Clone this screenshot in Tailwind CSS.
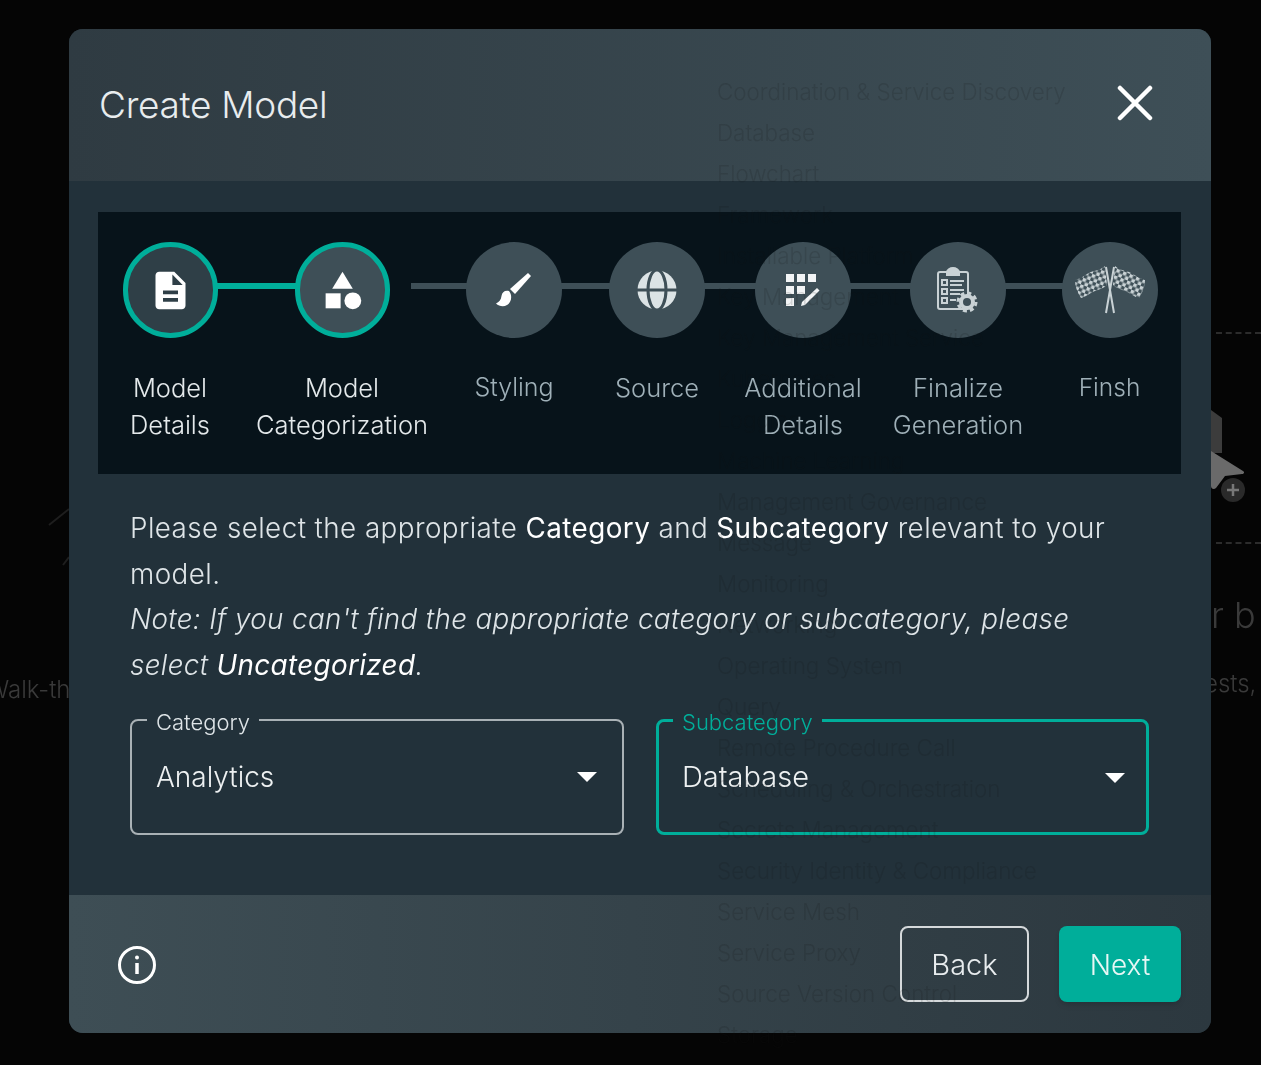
<!DOCTYPE html>
<html lang="en">
<head>
    <meta charset="UTF-8">
    <meta name="viewport" content="width=device-width, initial-scale=1.0">
    <title>Create Model</title>
    <script src="https://cdn.jsdelivr.net/npm/@tailwindcss/browser@4"></script>
</head>
<body class="bg-[#050505]">
    <div class="relative w-[1261px] h-[1065px] overflow-hidden font-['Inter',sans-serif] font-light blur-[0.5px]">
        <!-- Page behind the modal -->
        <span class="absolute left-[-14px] top-[674px] text-[24px] leading-[32px] text-[#3a3a3a] whitespace-nowrap">Walk-th</span>
        <span class="absolute left-[1211px] top-[592px] text-[36px] leading-[46px] text-[#3a3a3a] whitespace-nowrap">r b</span>
        <span class="absolute left-[1204px] top-[668px] text-[24px] leading-[32px] text-[#3a3a3a] whitespace-nowrap">ests,</span>
        <div class="absolute left-[1216px] top-[332px] w-[45px] border-t-2 border-dashed border-[#2c2c2c]"></div>
        <div class="absolute left-[1216px] top-[542px] w-[45px] border-t-2 border-dashed border-[#2c2c2c]"></div>
        <svg class="absolute left-[1205px] top-[405px]" width="56" height="105" viewBox="0 0 56 105">
            <path d="M6 5l11 8v35H6z" fill="#3c3c3c"/>
            <path d="M6 46l32 20c2 1 1 3-1 3l-17 2-9 12c-2 2-5 1-5-2z" fill="#6a6a6a"/>
            <circle cx="28" cy="85" r="12" fill="#2a2a2a"/>
            <path d="M28 79v12M22 85h12" stroke="#777" stroke-width="2.500"/>
        </svg>
        <svg class="absolute left-[45px] top-[505px]" width="24" height="65" viewBox="0 0 24 65" fill="none" stroke="#1e1e1e" stroke-width="2">
            <path d="M4 20L24 4M18 60l6-8"/>
        </svg>

        <!-- Modal -->
        <div class="absolute left-[69px] top-[29px] w-[1142px] h-[1004px] rounded-[14px] overflow-hidden bg-[#22313a] flex flex-col text-white">
            <div class="h-[152px] shrink-0 flex items-center justify-between pl-[30px] pr-[58px] bg-gradient-to-r from-[#2f3b42] to-[#3e4f57]">
                <h1 class="text-[37px] leading-[46px] font-light text-[#e8ecee] tracking-[-0.3px]">Create Model</h1>
                <svg class="mb-[5px]" width="36" height="36" viewBox="0 0 36 36" fill="none" stroke="#ffffff" stroke-width="4.500" stroke-linecap="round">
                    <path d="M3 3l30 30M33 3L3 33"/>
                </svg>
            </div>

            <div class="flex-1 pl-[29px] pr-[30px] pt-[31px]">
                <!-- Stepper -->
                <div class="relative h-[262px] bg-[#07131a] pt-[30px] grid grid-cols-[144px_200px_144px_142px_150px_160px_143px]">
                    <div class="absolute left-[118px] top-[71px] w-[80px] h-[6px] bg-[#00ae9a]"></div>
                    <div class="absolute left-[313px] top-[71px] w-[652px] h-[6px] bg-[#3e4f57]"></div>

                    <div class="relative flex flex-col items-center">
                        <div class="w-[95px] h-[96px] rounded-full border-[5px] border-[#00ae9a] bg-[#2f3f47] flex items-center justify-center">
                            <svg width="45" height="45" viewBox="0 0 24 24" fill="#ffffff"><path d="M14 2H6c-1.100 0-2 .9-2 2v16c0 1.100.9 2 2 2h12c1.100 0 2-.9 2-2V8l-6-6zm2 16H8v-2h8v2zm0-4H8v-2h8v2zm-3-5V3.500L18.500 9H13z"/></svg>
                        </div>
                        <p class="mt-[31px] text-[25.500px] leading-[37px] text-center text-[#e4e9eb] whitespace-nowrap">Model<br>Details</p>
                    </div>
                    <div class="relative flex flex-col items-center">
                        <div class="w-[95px] h-[96px] rounded-full border-[5px] border-[#00ae9a] bg-[#3e4f57] flex items-center justify-center">
                            <svg width="45" height="45" viewBox="0 0 24 24" fill="#ffffff"><path d="M12 2l-5.500 9h11z"/><circle cx="17.500" cy="17.500" r="4.500"/><path d="M3 13.500h8v8H3z"/></svg>
                        </div>
                        <p class="mt-[31px] text-[25.500px] leading-[37px] text-center text-[#e4e9eb] whitespace-nowrap">Model<br>Categorization</p>
                    </div>
                    <div class="relative flex flex-col items-center">
                        <div class="w-[96px] h-[96px] rounded-full bg-[#3e4f57] flex items-center justify-center">
                            <svg width="36" height="36" viewBox="0 0 36 36" fill="#ffffff"><path d="M32 1l3 3-16 18-5-5z"/><path d="M13 19c-4-1-7 1-7.500 5C5 28 3 30 0 31.500c3 3 8 3.500 11 1.500 4-2 6-9 2-14z"/></svg>
                        </div>
                        <p class="mt-[31px] text-[25px] leading-[37px] text-center text-[#9fb0b8]">Styling</p>
                    </div>
                    <div class="relative flex flex-col items-center">
                        <div class="w-[96px] h-[96px] rounded-full bg-[#3e4f57] flex items-center justify-center">
                            <svg width="40" height="40" viewBox="0 0 40 40">
                                <circle cx="20" cy="20" r="19.500" fill="#dce3e5"/>
                                <ellipse cx="20" cy="20" rx="9" ry="20" fill="none" stroke="#3e4f57" stroke-width="3"/>
                                <path d="M0 20h40" stroke="#3e4f57" stroke-width="3"/>
                            </svg>
                        </div>
                        <p class="mt-[31px] text-[25.500px] leading-[37px] text-center text-[#9fb0b8]">Source</p>
                    </div>
                    <div class="relative flex flex-col items-center">
                        <div class="w-[96px] h-[96px] rounded-full bg-[#3e4f57] flex items-center justify-center">
                            <svg width="34" height="32" viewBox="0 0 34 32" fill="#f2f4f5">
                                <path d="M0 0h8v8H0zM11 0h8v8h-8zM22 0h8v8h-8zM0 12h8v8H0zM11 12h8v8h-8zM0 24h8v8H0z"/>
                                <path d="M31 14l2.500 2.500L19 31l-4 1 1-4z"/>
                            </svg>
                        </div>
                        <p class="mt-[31px] text-[25.500px] leading-[37px] text-center text-[#9fb0b8] whitespace-nowrap">Additional<br>Details</p>
                    </div>
                    <div class="relative flex flex-col items-center">
                        <div class="w-[96px] h-[96px] rounded-full bg-[#3e4f57] flex items-center justify-center">
                            <svg width="42" height="46" viewBox="0 0 42 46" fill="none" stroke="#c9d2d5" stroke-width="2">
                                <rect x="1" y="5" width="30" height="37" rx="2"/>
                                <path d="M10 5c0-2 3-4 6-4s6 2 6 4v3H10z" fill="#c9d2d5"/>
                                <path d="M5 13h5v5H5zM5 22h5v5H5zM5 31h5v5H5zM13 14h14M13 18h12M13 23h14M13 27h10M13 33h6"/>
                                <circle cx="30" cy="35" r="7" fill="#3e4f57" stroke="none"/>
                                <circle cx="30" cy="35" r="6" stroke="#c9d2d5" stroke-width="4"/>
                                <circle cx="30" cy="35" r="9" stroke="#c9d2d5" stroke-width="3" stroke-dasharray="4 3.070"/>
                            </svg>
                        </div>
                        <p class="mt-[31px] text-[25.500px] leading-[37px] text-center text-[#9fb0b8] whitespace-nowrap">Finalize<br>Generation</p>
                    </div>
                    <div class="relative flex flex-col items-center">
                        <div class="w-[96px] h-[96px] rounded-full bg-[#3e4f57] flex items-center justify-center">
                            <svg width="74" height="48" viewBox="0 0 74 48" fill="none">
                                <defs>
                                    <pattern id="check" width="7" height="7" patternUnits="userSpaceOnUse" patternTransform="rotate(22)">
                                        <rect width="7" height="7" fill="#3e4f57"/>
                                        <rect width="3.500" height="3.500" fill="#c9d2d5"/>
                                        <rect x="3.500" y="3.500" width="3.500" height="3.500" fill="#c9d2d5"/>
                                    </pattern>
                                </defs>
                                <path d="M32 0c-5 5-12 4-18 8-4 3-8 5-12 6 0 6 2 12 6 18 5-1 9-5 14-7 5-2 9-3 12-6z" fill="url(#check)"/>
                                <path d="M42 0c5 5 12 4 18 8 4 3 8 5 12 6 0 6-2 12-6 18-5-1-9-5-14-7-5-2-9-3-12-6z" fill="url(#check)"/>
                                <path d="M33 1l8 46M41 1l-8 46" stroke="#c9d2d5" stroke-width="2"/>
                            </svg>
                        </div>
                        <p class="mt-[31px] text-[24.500px] leading-[37px] text-center text-[#9fb0b8]">Finsh</p>
                    </div>
                </div>

                <!-- Help text -->
                <div class="px-[32px] pt-[32px] text-[27.800px] leading-[45.500px] text-[#dfe5e8]">
                    <p class="tracking-[0.43px]">Please select the appropriate <span class="font-normal text-white">Category</span> and <span class="font-normal text-white">Subcategory</span> relevant to your model.</p>
                    <p class="italic tracking-[0.35px]">Note: If you can't find the appropriate category or subcategory, please select <span class="font-normal text-white">Uncategorized</span>.</p>
                </div>

                <!-- Selects -->
                <div class="px-[32px] mt-[31px] grid grid-cols-[494px_493px] gap-x-[32px]">
                    <div class="relative h-[116px] rounded-lg border-2 border-[#a9b1b5] pl-[24px] pr-[25px] pt-[37px] flex justify-between">
                        <span class="absolute -top-[11px] left-[15px] px-[9px] bg-[#22313a] text-[22px] leading-[24px] text-[#dfe5e8]">Category</span>
                        <span class="text-[28px] leading-[38px] text-[#eef1f2]">Analytics</span>
                        <svg class="mt-[14px]" width="20" height="10" viewBox="0 0 20 10" fill="#ffffff"><path d="M0 0h20l-10 10z"/></svg>
                    </div>
                    <div class="relative h-[116px] rounded-lg border-[3px] border-[#00ae9a] pl-[23px] pr-[21px] pt-[36px] flex justify-between">
                        <span class="absolute -top-[12px] left-[14px] px-[9px] bg-[#22313a] text-[22px] leading-[24px] text-[#00ae9a]">Subcategory</span>
                        <span class="text-[29px] leading-[38px] text-[#eef1f2]">Database</span>
                        <svg class="mt-[15px]" width="20" height="10" viewBox="0 0 20 10" fill="#ffffff"><path d="M0 0h20l-10 10z"/></svg>
                    </div>
                </div>
            </div>

            <!-- Footer -->
            <div class="h-[138px] shrink-0 flex items-center justify-between pl-[48px] pr-[30px] bg-gradient-to-r from-[#3e4e55] to-[#2c383f]">
                <svg class="mt-[2px]" width="40" height="40" viewBox="0 0 40 40" fill="none" stroke="#ffffff" stroke-width="3">
                    <circle cx="20" cy="20" r="17.500"/>
                    <path d="M20 18v11" stroke-width="3.500"/>
                    <circle cx="20" cy="12.500" r="2" fill="#ffffff" stroke="none"/>
                </svg>
                <div class="flex gap-[30px]">
                    <button class="w-[129px] h-[76px] rounded-lg border-2 border-[#d5d9db] pt-[2px] text-[29px] text-[#e8ecee]">Back</button>
                    <button class="w-[122px] h-[76px] rounded-lg bg-[#00ae9a] pt-[2px] text-[28px] text-[#e8f7f5] shadow-md">Next</button>
                </div>
            </div>
        </div>

        <!-- List showing faintly through the modal -->
        <ul class="absolute left-[717px] top-[71px] text-[22.400px] leading-[41px] text-[#111111]/15 pointer-events-none whitespace-nowrap">
            <li>Coordination &amp; Service Discovery</li>
            <li>Database</li>
            <li>Flowchart</li>
            <li>Framework</li>
            <li>Installable Platform</li>
            <li>Key Management</li>
            <li>Key Management Service</li>
            <li>Kubernetes</li>
            <li>Logging</li>
            <li>Machine Learning</li>
            <li>Management Governance</li>
            <li>Message</li>
            <li>Monitoring</li>
            <li>Networking</li>
            <li>Operating System</li>
            <li>Query</li>
            <li>Remote Procedure Call</li>
            <li>Scheduling &amp; Orchestration</li>
            <li>Secrets Management</li>
            <li>Security Identity &amp; Compliance</li>
            <li>Service Mesh</li>
            <li>Service Proxy</li>
            <li>Source Version Control</li>
            <li>Storage</li>
        </ul>
    </div>
</body>
</html>
